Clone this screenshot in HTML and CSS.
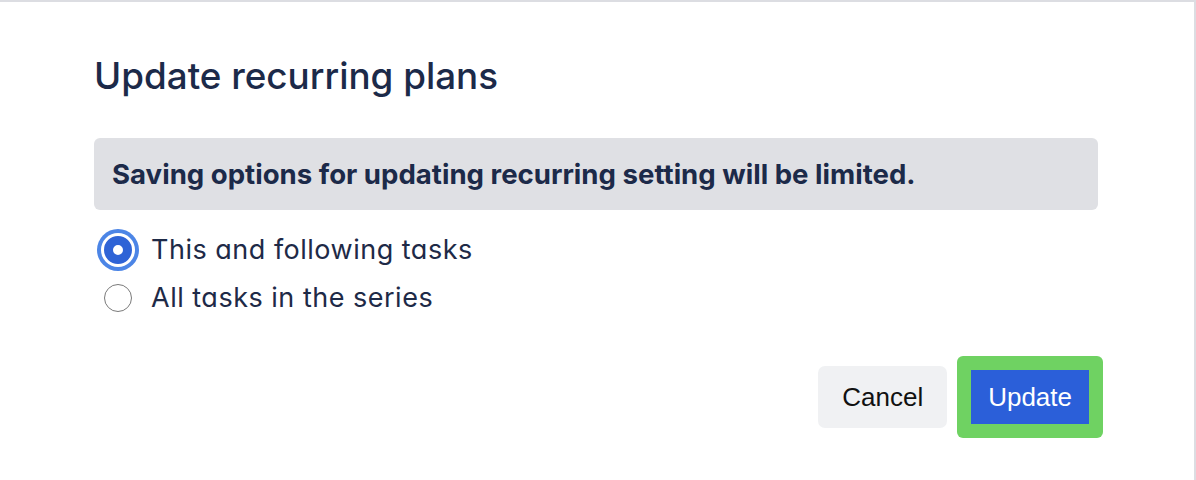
FILE: index.html
```html
<!DOCTYPE html>
<html lang="en">
<head>
<meta charset="UTF-8" />
<meta name="viewport" content="width=device-width, initial-scale=1" />
<title>Update recurring plans</title>
<link rel="stylesheet" href="styles.css">
</head>
<body>

<div class="dialog">
  <h1 class="dialog-title">Update recurring plans</h1>

  <div class="notice">Saving options for updating recurring setting will be limited.</div>

  <div class="options">
    <label class="option">
      <input type="radio" name="scope" value="following" checked />
      <span>This and following tasks</span>
    </label>
    <label class="option">
      <input type="radio" name="scope" value="all" />
      <span>All tasks in the series</span>
    </label>
  </div>

  <div class="actions">
    <button class="btn btn-cancel">Cancel</button>
    <span class="highlight">
      <button class="btn btn-update">Update</button>
    </span>
  </div>
</div>

</body>
</html>
```

FILE: styles.css
```css
html, body {
  margin: 0;
  padding: 0;
  background: #fff;
}
.dialog {
  box-sizing: border-box;
  height: 480px;
  width: 1196px;
  border-top: 2px solid #dcdde2;
  border-right: 2px solid #dcdde2;
  padding: 0 96px 0 94px;
  font-family: Inter, "Noto Sans", sans-serif;
  color: #1d2a48;
}
.dialog-title {
  margin: 0;
  padding-top: 52px;
  font-size: 36.8px;
  line-height: 44px;
  font-weight: 500;
  color: #1c2a49;
}
.notice {
  margin-top: 40px;
  height: 72px;
  padding: 0 18px;
  display: flex;
  align-items: center;
  background: #dfe0e4;
  border-radius: 6px;
  font-size: 27.6px;
  font-weight: 700;
  color: #1c2a49;
}
.options {
  margin-top: 26px;
  display: flex;
  flex-direction: column;
  gap: 20px;
}
.option {
  display: flex;
  align-items: center;
  gap: 19px;
  font-size: 27px;
  line-height: 28px;
  font-feature-settings: "cv11";
  letter-spacing: 0.5px;
  color: #1e2a47;
}
.option input {
  appearance: none;
  margin: 0 0 0 10px;
  width: 28px;
  height: 28px;
  border-radius: 50%;
  border: 1.5px solid #7a7a7a;
  background: #fff;
  box-sizing: border-box;
}
.option input:checked {
  border: 9px solid #2e63d6;
  box-shadow: 0 0 0 3px #fff, 0 0 0 7px #4c85e6;
}
.actions {
  margin-top: 44px;
  display: flex;
  justify-content: flex-end;
  align-items: center;
  gap: 10px;
  margin-right: -5px;
}
.btn {
  font-family: "Liberation Sans", Arial, sans-serif;
  font-size: 26px;
  border: none;
  cursor: pointer;
}
.btn-cancel {
  height: 62px;
  padding: 0 24px;
  background: #f0f1f3;
  color: #111;
  border-radius: 7px;
}
.highlight {
  display: inline-flex;
  padding: 14px;
  background: #6fd262;
  border-radius: 6px;
}
.btn-update {
  height: 54px;
  padding: 0 17px;
  background: #2b5fd9;
  color: #fff;
  border-radius: 0;
}
```
